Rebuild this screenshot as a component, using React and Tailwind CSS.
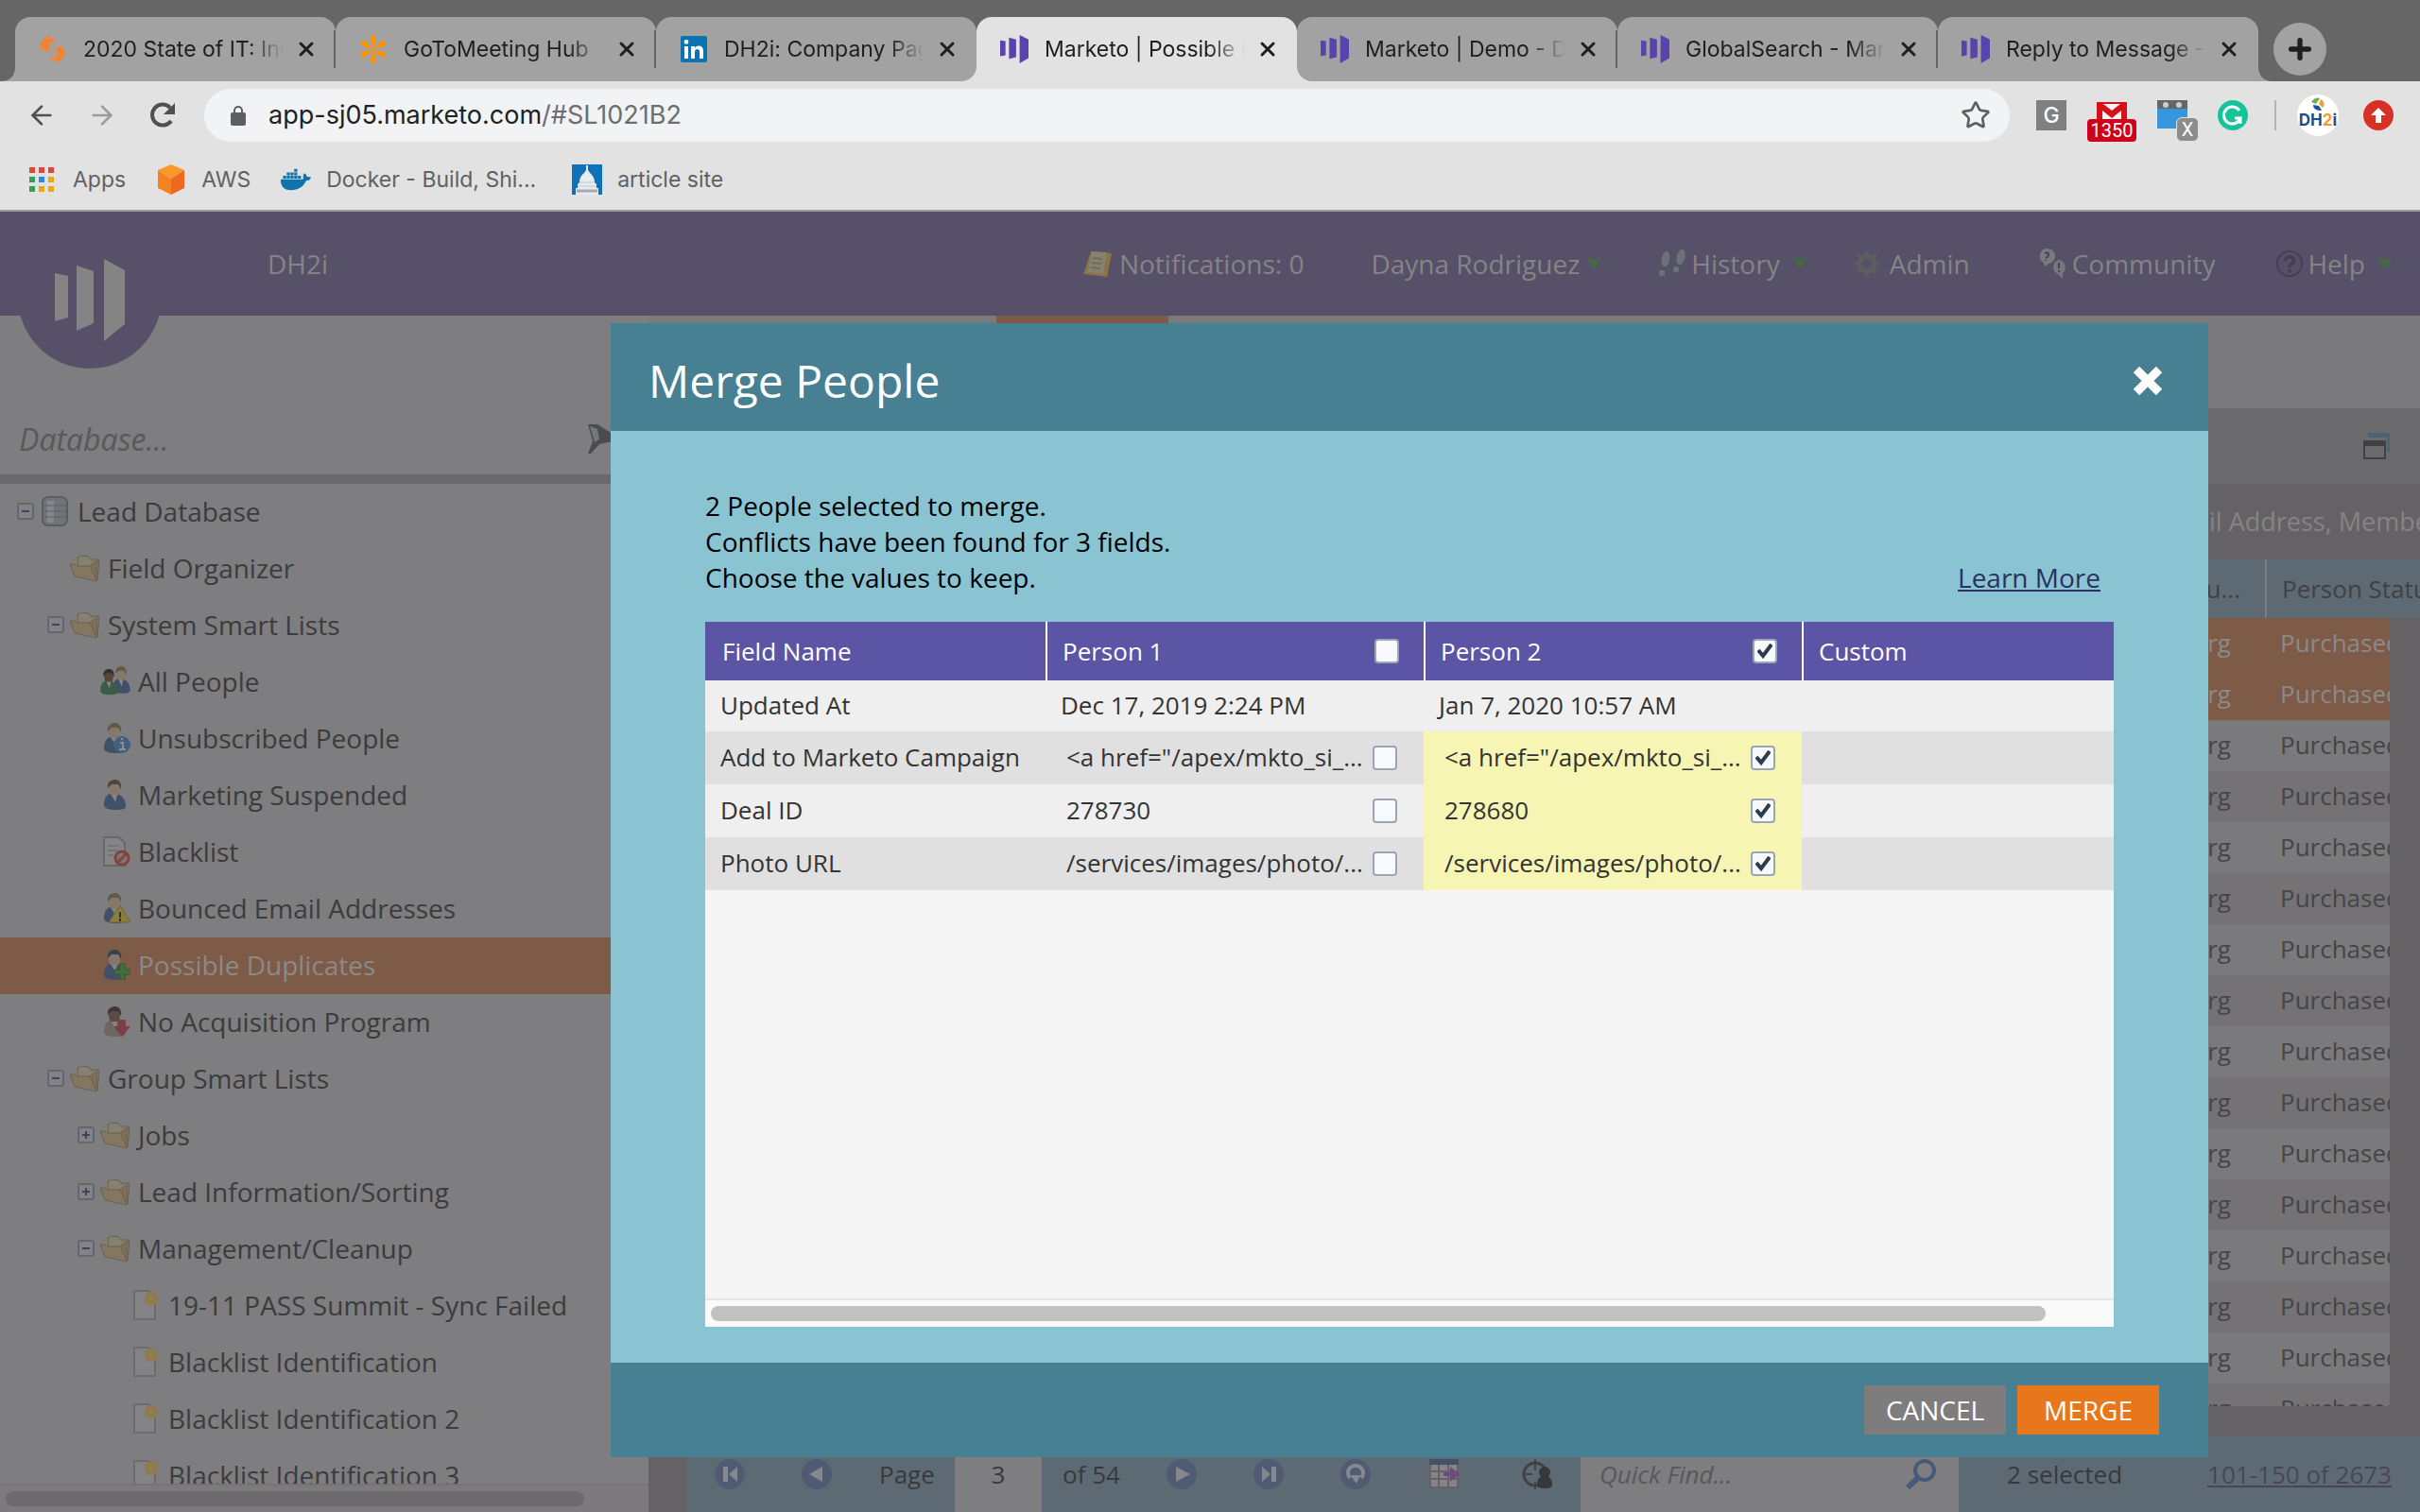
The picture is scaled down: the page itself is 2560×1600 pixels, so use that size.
import React, { useState } from "react";
import { ArrowLeft, ArrowRight, Plus, RotateCw, Star, X } from "lucide-react";
import { FaDocker } from "react-icons/fa";

/* ---------- icons ---------- */

const MarketoIcon = ({ className }) => (
  <svg viewBox="0 0 32 32" className={className} fill="currentColor">
    <path d="M0 6l6 1v16l-6 1zM10 3l8 2v20l-8 2zM22 0l10 5v21l-10 6z" />
  </svg>
);

const SpiceworksIcon = () => (
  <svg viewBox="0 0 32 32" className="size-8" fill="#f58233">
    <path d="M11 0l3 5 5 1-2 4 2 5-6-1-3 5-4-3-4 1 1-6 2-5 4-1z" />
    <path d="M21 32l-3-5-5-1 2-4-1-4 5 0 3-5 5 1 2 5-2 6-3 4-2-1z" />
    <circle cx="15" cy="12" r="3" fill="#a2a2a2" />
    <circle cx="18" cy="21" r="3" fill="#a2a2a2" />
  </svg>
);

const GoToIcon = () => (
  <svg viewBox="0 0 32 32" className="size-8" fill="#ff9100">
    {[0, 60, 120, 180, 240, 300].map((deg) => (
      <path key={deg} d="M16 16l-3-11a3 4 0 1 1 6 0z" transform={`rotate(${deg} 16 16)`} />
    ))}
  </svg>
);

const LinkedInIcon = () => (
  <svg viewBox="0 0 32 32" className="size-8">
    <rect x="2" y="2" width="28" height="28" rx="2" fill="#0a73b1" />
    <path
      fill="#fff"
      d="M6 13h4v13H6zM8 6a2.400 2.400 0 1 1 0 4.800A2.400 2.400 0 0 1 8 6zM13 13h4v2c1-1.600 2.400-2.400 4.200-2.400 3.400 0 4.800 2.200 4.800 6V26h-4v-6.800c0-2-.6-3.200-2.300-3.200-1.800 0-2.700 1.200-2.700 3.200V26h-4z"
    />
  </svg>
);

const AppsIcon = () => (
  <svg viewBox="0 0 26 26" className="size-[26px]">
    {["#ea4335", "#ea4335", "#ea4335", "#34a053", "#2f86f0", "#eaa80c", "#34a053", "#eaa80c", "#eaa80c"].map(
      (fill, i) => (
        <rect key={i} x={(i % 3) * 10} y={Math.floor(i / 3) * 10} width="6" height="6" fill={fill} />
      )
    )}
  </svg>
);

const AwsIcon = () => (
  <svg viewBox="0 0 32 32" className="size-8">
    <path d="M16 0l14 6-14 9L2 6z" fill="#fb9a2a" />
    <path d="M2 6l14 9v17L2 25z" fill="#f58220" />
    <path d="M30 6l-14 9v17l14-7z" fill="#ee6820" />
  </svg>
);

const CapitolIcon = () => (
  <svg viewBox="0 0 32 32" className="size-8">
    <rect width="32" height="32" fill="#0d72b8" />
    <path d="M15 1h2v5l2 3c4 3 5 7 5 10l2 2v4h2v7H4v-7h2v-4l2-2c0-3 1-7 5-10l2-3z" fill="#e9ecef" />
    <path d="M8 19h16M6 23h20" stroke="#c3c6ca" strokeWidth="1" />
    <path d="M5 28h22" stroke="#a7a9ac" strokeWidth="3" />
  </svg>
);

const LogoMark = () => (
  <svg viewBox="0 0 152 152" className="size-[152px]">
    <circle cx="76" cy="76" r="76" fill="#565168" />
    <path fill="#858485" d="M39 51l14 3v44l-14 4zM62 43l18 6v55l-18 8zM91 36l22 12v57l-22 18z" />
  </svg>
);

const NoteIcon = () => (
  <svg viewBox="0 0 32 32" className="size-8">
    <path d="M8 3l22 2-5 25-25-3z" fill="#8a7345" />
    <path d="M9 3l16 1-4 23-17-2z" fill="#85826f" />
    <path d="M10 10l10 1M9 15l10 1M8 20l10 1" stroke="#706c60" strokeWidth="2" />
  </svg>
);

const FeetIcon = () => (
  <svg viewBox="0 0 32 32" className="size-8" fill="#6c7079" stroke="#4d5058" strokeWidth="1">
    <ellipse cx="9" cy="11" rx="5" ry="9" transform="rotate(10 9 11)" />
    <ellipse cx="5" cy="26" rx="4" ry="4" />
    <ellipse cx="25" cy="9" rx="5" ry="9" transform="rotate(14 25 9)" />
    <ellipse cx="20" cy="22" rx="4" ry="4" />
  </svg>
);

const GearIcon = () => (
  <svg viewBox="0 0 32 32" className="size-7">
    <circle cx="16" cy="16" r="9" fill="none" stroke="#5d5e60" strokeWidth="6" />
    {[0, 45, 90, 135].map((deg) => (
      <path key={deg} d="M14 0h4v5h-4zM14 27h4v5h-4z" fill="#5d5e60" transform={`rotate(${deg} 16 16)`} />
    ))}
  </svg>
);

const CommunityIcon = () => (
  <svg viewBox="0 0 32 34" className="h-[34px] w-8">
    <path d="M9 1a8 8 0 0 1 2 16l-4 3-1-4A8 8 0 0 1 9 1z" fill="#7a7a7e" />
    <path d="M22 13a8 8 0 0 1 4 14l0 6-5-5a8 8 0 0 1 1-15z" fill="#77777c" />
    <path d="M7 6q4-2 4 1t-3 4M8 13v1" fill="none" stroke="#454450" strokeWidth="2" />
    <path d="M22 16v6M22 24v2" stroke="#454450" strokeWidth="2" />
  </svg>
);

const HelpIcon = () => (
  <svg viewBox="0 0 32 32" className="size-[30px]" fill="none" stroke="#434151">
    <circle cx="16" cy="16" r="14" strokeWidth="2" />
    <path d="M11 13c0-7 11-6 10 0-1 3-5 3-5 7" strokeWidth="4" />
    <circle cx="16" cy="24" r="1" strokeWidth="3" />
  </svg>
);

const CaretIcon = () => (
  <svg viewBox="0 0 14 12" className="h-3 w-3.5">
    <path d="M0 1q3-2 7 1 4-3 7-1L7 12z" fill="#46693f" />
  </svg>
);

const FunnelIcon = () => (
  <svg viewBox="0 0 36 32" className="h-8 w-9">
    <path d="M2 0h10l22 14v3l-20 4-9 10H2l5-13z" fill="#4b4b52" />
    <path d="M4 2l8 3 2 11-5 3z" fill="#77767b" />
  </svg>
);

const ToggleIcon = ({ open }) => (
  <svg viewBox="0 0 18 18" className="size-[18px]">
    <rect x="1" y="1" width="16" height="16" rx="2" fill="#828287" stroke="#64656f" strokeWidth="2" />
    <path d={open ? "M5 9h8" : "M5 9h8M9 5v8"} stroke="#3f4252" strokeWidth="2" />
  </svg>
);

const FolderIcon = () => (
  <svg viewBox="0 0 32 32" className="size-8" stroke="#6a6152" strokeWidth="1">
    <path d="M8 5l4-2 8 1 2 3 9 0-2 22-19-5z" fill="#85806f" />
    <path d="M0 12l5 0 3 2 13 0 6 2 1 14L5 25z" fill="#85765f" />
    <path d="M21 14l8-6-1 21z" fill="#7d6f58" />
  </svg>
);

const DatabaseIcon = () => (
  <svg viewBox="0 0 32 32" className="size-8">
    <rect x="3" y="1" width="26" height="30" rx="6" fill="#71757a" stroke="#595d63" strokeWidth="2" />
    <rect x="8" y="5" width="7" height="23" fill="#85888b" />
    <path d="M4 10h24M4 16h24M4 22h24" stroke="#5b5f66" strokeWidth="1" />
  </svg>
);

const Person = ({ hair = "#5f594b", skin = "#85786a", body = "#3f5068" }) => (
  <>
    <path d="M4 27c0-7 3-11 6-12h8c5 2 9 6 9 13 0 3-4 4-10 4S4 31 4 27z" fill={body} />
    <ellipse cx="15" cy="10" rx="6" ry="8" fill={skin} />
    <path d="M8 9c-1-7 4-9 8-9s7 4 6 10l-3-5-7 0z" fill={hair} />
    <path d="M12 16h6l-2 8z" fill="#858585" />
  </>
);

const TreeGlyph = ({ type }) => {
  if (type === "folder") return <FolderIcon />;
  if (type === "database") return <DatabaseIcon />;
  return (
    <svg viewBox="0 0 32 32" className="size-8">
      {type === "people" && (
        <>
          <g transform="translate(10 0) scale(.8 .9)"><Person /></g>
          <g transform="translate(-3 3) scale(.8 .85)"><Person hair="#34302e" skin="#58463c" body="#3b5c48" /></g>
        </>
      )}
      {type === "info" && (
        <>
          <Person />
          <circle cx="23" cy="23" r="9" fill="#465f7c" />
          <path d="M21 21h3v7M20 28h7M22 17h2" stroke="#8b9097" strokeWidth="2" fill="none" />
        </>
      )}
      {type === "person" && <Person hair="#4c463e" />}
      {type === "blocked" && (
        <>
          <path d="M4 1h16l6 6v24H4z" fill="#858486" stroke="#686769" strokeWidth="2" />
          <path d="M8 10h12M8 15h10M8 20h6" stroke="#747375" strokeWidth="2" />
          <circle cx="23" cy="23" r="7" fill="#7b7777" stroke="#85423f" strokeWidth="3" />
          <path d="M18 28l10-10" stroke="#85423f" strokeWidth="3" />
        </>
      )}
      {type === "warning" && (
        <>
          <Person />
          <path d="M21 13l11 18H9z" fill="#8b7d40" stroke="#716537" strokeWidth="1" />
          <path d="M21 20v6M21 27v3" stroke="#36332a" strokeWidth="2" />
        </>
      )}
      {type === "add" && (
        <>
          <Person hair="#37424d" />
          <path d="M21 15h5v6h6v5h-6v6h-5v-6h-6v-5h6z" fill="#41703e" stroke="#35572f" strokeWidth="1" />
        </>
      )}
      {type === "down" && (
        <>
          <Person hair="#3b3637" skin="#5b4a44" body="#6f6663" />
          <path d="M19 14h8v7h5l-9 11-9-11h5z" fill="#7b3e48" />
        </>
      )}
      {type === "page" && (
        <>
          <path d="M4 1h15l7 8v22H4z" fill="#838284" stroke="#6c6b6d" strokeWidth="2" />
          <circle cx="22" cy="9" r="7" fill="#94794a" />
          <circle cx="22" cy="9" r="2" fill="#88837a" />
        </>
      )}
    </svg>
  );
};

const WindowIcon = () => (
  <svg viewBox="0 0 28 28" className="size-7">
    <path d="M5 0h23v20h-3V5H5z" fill="#4d6273" />
    <path d="M0 8h24v20H0zM2 14v12h20V14z" fill="#414042" fillRule="evenodd" />
  </svg>
);

const PagerIcon = ({ name }) => (
  <svg viewBox="0 0 32 32" className="size-8">
    <circle cx="16" cy="16" r="16" fill="#4f5b73" />
    <g fill="#85888d">
      {name === "first" && <path d="M9 8h5v16H9zM24 8v16l-9-8z" />}
      {name === "prev" && <path d="M22 8v16L8 16z" />}
      {name === "next" && <path d="M10 8v16l15-8z" />}
      {name === "last" && <path d="M19 8h5v16h-5zM9 8v16l9-8z" />}
    </g>
    {name === "refresh" && (
      <>
        <path d="M10 20a8 8 0 1 1 12 0" fill="none" stroke="#85888d" strokeWidth="4" />
        <path d="M10 17h11l-4 9z" fill="#85888d" />
      </>
    )}
  </svg>
);

const ExportIcon = () => (
  <svg viewBox="0 0 32 32" className="size-8">
    <rect x="1" y="1" width="29" height="29" fill="#858488" stroke="#676069" strokeWidth="2" />
    <rect x="0" y="0" width="31" height="6" fill="#444f68" />
    <path d="M1 13h29M1 21h29M10 6v24M20 6v24" stroke="#676069" strokeWidth="2" />
    <path d="M15 14h7V8l10 8-10 8v-6h-7z" fill="#6b4c7b" />
  </svg>
);

const TargetIcon = () => (
  <svg viewBox="0 0 32 32" className="size-8">
    <circle cx="14" cy="16" r="12" fill="none" stroke="#404247" strokeWidth="3" />
    <path d="M14 0v12M0 16h11M14 24v8" stroke="#404247" strokeWidth="2" />
    <circle cx="24" cy="14" r="6" fill="#37383b" />
    <path d="M21 18h6c4 2 5 5 5 9 0 3-3 4-8 4s-8-1-8-4c0-4 1-7 5-9z" fill="#37383b" />
  </svg>
);

const SearchIcon = () => (
  <svg viewBox="0 0 32 32" className="size-8" fill="none" stroke="#465a7a">
    <circle cx="20" cy="12" r="10" strokeWidth="4" />
    <path d="M13 20L2 30" strokeWidth="6" />
  </svg>
);

/* ---------- data ---------- */

const tabs = [
  { title: "2020 State of IT: Industry", icon: <SpiceworksIcon /> },
  { title: "GoToMeeting Hub", icon: <GoToIcon /> },
  { title: "DH2i: Company Page", icon: <LinkedInIcon />, shape: "rounded-br-2xl" },
  { title: "Marketo | Possible Dup", active: true },
  { title: "Marketo | Demo - DH", shape: "rounded-bl-2xl" },
  { title: "GlobalSearch - Marketo" },
  { title: "Reply to Message - M" },
];

const tree = [
  { label: "Lead Database", level: 0, icon: "database", open: true },
  { label: "Field Organizer", level: 1, icon: "folder" },
  { label: "System Smart Lists", level: 1, icon: "folder", open: true },
  { label: "All People", level: 2, icon: "people" },
  { label: "Unsubscribed People", level: 2, icon: "info" },
  { label: "Marketing Suspended", level: 2, icon: "person" },
  { label: "Blacklist", level: 2, icon: "blocked" },
  { label: "Bounced Email Addresses", level: 2, icon: "warning" },
  { label: "Possible Duplicates", level: 2, icon: "add", selected: true },
  { label: "No Acquisition Program", level: 2, icon: "down" },
  { label: "Group Smart Lists", level: 1, icon: "folder", open: true },
  { label: "Jobs", level: 2, icon: "folder", open: false },
  { label: "Lead Information/Sorting", level: 2, icon: "folder", open: false },
  { label: "Management/Cleanup", level: 2, icon: "folder", open: true },
  { label: "19-11 PASS Summit - Sync Failed", level: 3, icon: "page" },
  { label: "Blacklist Identification", level: 3, icon: "page" },
  { label: "Blacklist Identification 2", level: 3, icon: "page" },
  { label: "Blacklist Identification 3", level: 3, icon: "page" },
];

const indent = ["pl-[18px]", "pl-[50px]", "pl-[82px]", "pl-[114px]"];

const conflicts = [
  { field: "Add to Marketo Campaign", one: '<a href="/apex/mkto_si_...', two: '<a href="/apex/mkto_si_...' },
  { field: "Deal ID", one: "278730", two: "278680" },
  { field: "Photo URL", one: "/services/images/photo/...", two: "/services/images/photo/..." },
];

/* ---------- browser ---------- */

const BrowserTab = ({ tab, divider }) => (
  <li
    className={`flex h-full max-w-[339px] min-w-0 flex-1 ${
      tab.shape ? "bg-[linear-gradient(#666_50%,#e2e2e2_50%)]" : ""
    }`}
  >
    <div
      className={`flex min-w-0 flex-1 items-center rounded-t-2xl pl-6 ${tab.shape || ""} ${
        tab.active ? "bg-[#e2e2e2]" : "bg-[#a2a2a2]"
      }`}
    >
      {tab.icon || <MarketoIcon className="size-8 p-px text-[#5943ad]" />}
      <span className="ml-4 w-[212px] overflow-hidden whitespace-nowrap text-[#1f1f1f] [mask-image:linear-gradient(90deg,#000_82%,transparent)]">
        {tab.title}
      </span>
      <button aria-label="Close tab" className="ml-3 text-[#1f1f1f]">
        <X className="size-6" strokeWidth={3} />
      </button>
      {divider && <span className="ml-auto h-10 w-0.5 bg-[#666]" />}
    </div>
  </li>
);

const BrowserChrome = () => (
  <header className="shrink-0 border-b-2 border-[#9a9a9a] bg-[#e2e2e2] font-['Inter','Roboto',sans-serif] text-[23px]">
    <div className="flex h-[86px] bg-[#666] pt-[18px]">
      <svg viewBox="0 0 16 16" className="size-4 self-end" fill="#a2a2a2">
        <path d="M16 0v16H0Q16 16 16 0z" />
      </svg>
      <ul className="flex min-w-0 flex-1">
        {tabs.map((tab, i) => (
          <BrowserTab key={tab.title} tab={tab} divider={[0, 1, 4, 5].includes(i)} />
        ))}
        <li className="flex">
          <svg viewBox="0 0 16 16" className="size-4 self-end" fill="#a2a2a2">
            <path d="M0 0v16h16Q0 16 0 0z" />
          </svg>
          <button
            aria-label="New tab"
            className="mt-1.5 flex size-14 items-center justify-center rounded-full bg-[#a2a2a2] text-[#1f1f1f]"
          >
            <Plus className="size-8" strokeWidth={4} />
          </button>
        </li>
      </ul>
    </div>

    <div className="flex h-[72px] items-center py-2 pr-7 pl-7">
      <button aria-label="Back" className="text-[#505050]"><ArrowLeft className="size-8" strokeWidth={2} /></button>
      <button aria-label="Forward" className="ml-8 text-[#9c9c9c]"><ArrowRight className="size-8" strokeWidth={2} /></button>
      <button aria-label="Reload" className="ml-8 text-[#505050]">
        <svg viewBox="0 0 32 32" className="size-8">
          <path d="M25 22a11 11 0 1 1-1-14" fill="none" stroke="currentColor" strokeWidth="4" />
          <path d="M29 3v12H17z" fill="currentColor" />
        </svg>
      </button>
      <div className="ml-7 flex h-14 flex-1 items-center rounded-full bg-[#f1f3f4] pr-5 pl-7">
        <svg viewBox="0 0 16 22" className="h-[22px] w-4">
          <path d="M4 9V6a4 4 0 0 1 8 0v3" fill="none" stroke="#5c5f62" strokeWidth="2" />
          <rect y="8" width="16" height="14" rx="2" fill="#5c5f62" />
        </svg>
        <div
          role="textbox"
          aria-label="Address"
          contentEditable
          suppressContentEditableWarning
          className="ml-6 flex-1 text-[27px] text-[#202124]"
        >
          app-sj05.marketo.com<span className="text-[#6b6e71]">/#SL1021B2</span>
        </div>
        <button aria-label="Bookmark" className="text-[#5c5f62]"><Star className="size-8" strokeWidth={2} /></button>
      </div>

      <div className="ml-7 flex items-center gap-8">
        <span className="flex size-8 items-center justify-center bg-[#808080] text-[23px] font-medium text-white">G</span>
        <span className="relative size-8">
          <svg viewBox="0 0 32 24" className="mt-0.5 h-6 w-8">
            <rect width="32" height="24" fill="#f4f4f4" />
            <path d="M0 0h32v24h-6V9l-10 8L6 9v15H0z" fill="#d5121a" />
            <path d="M7 2l9 7 9-7z" fill="#f4f4f4" />
          </svg>
          <span className="absolute top-5 -left-2.5 flex h-6 w-[52px] items-center justify-center rounded-[4px] bg-[#d0021b] font-['Roboto'] text-[20px] text-white">
            1350
          </span>
        </span>
        <span className="relative size-8">
          <svg viewBox="0 0 32 30" className="h-[30px] w-8">
            <rect width="32" height="30" rx="1" fill="#3596dd" />
            <rect width="32" height="9" fill="#666" />
            <circle cx="9" cy="5" r="3" fill="#ccc" />
            <circle cx="23" cy="5" r="3" fill="#ccc" />
          </svg>
          <span className="absolute top-[18px] left-5 flex h-[26px] w-6 items-center justify-center rounded-md border border-[#e2e2e2] bg-[#8c8c8c] font-['Roboto'] text-[20px] text-white">
            X
          </span>
        </span>
        <svg viewBox="0 0 32 32" className="size-8">
          <circle cx="16" cy="16" r="16" fill="#15c39a" />
          <path d="M23 11a9 9 0 1 0 1 8h-6M24 18v7" fill="none" stroke="#fff" strokeWidth="3" />
        </svg>
      </div>
      <span className="mx-[22px] ml-7 h-8 w-0.5 bg-[#b4b4b4]" />
      <span className="flex size-11 flex-col items-center rounded-full bg-white">
        <svg viewBox="0 0 16 16" className="mt-0.5 size-4">
          <path d="M1 6Q5 0 10 2L6 8z" fill="#6ab04c" />
          <path d="M11 3q6 4 2 9L9 8z" fill="#f0a030" />
          <path d="M3 9q0 6 9 6L9 10z" fill="#1b4f9c" />
        </svg>
        <span className="text-[17px] leading-[18px] font-bold text-[#174f9a]">
          DH<span className="text-[#f39a2d]">2</span>i
        </span>
      </span>
      <svg viewBox="0 0 32 32" className="ml-[26px] size-8">
        <circle cx="16" cy="16" r="16" fill="#d93025" />
        <path d="M16 8l8 8h-5v8h-6v-8H8z" fill="#fff" />
      </svg>
    </div>

    <nav className="flex h-16 items-center gap-8 pl-[31px] text-[#5f6164]">
      <a href="#apps" className="flex items-center gap-5"><AppsIcon />Apps</a>
      <a href="#aws" className="flex items-center gap-4"><AwsIcon />AWS</a>
      <a href="#docker" className="flex items-center gap-4">
        <FaDocker className="size-8 text-[#0f74ad]" />Docker - Build, Shi...
      </a>
      <a href="#article" className="ml-1.5 flex items-center gap-4"><CapitolIcon />article site</a>
    </nav>
  </header>
);

/* ---------- app ---------- */

const TopNav = () => (
  <nav className="flex h-[110px] shrink-0 items-center bg-[#565168] pl-[19px] text-[28px] text-[#858485]">
    {/* the mark hangs below the bar */}
    <div className="relative z-10 mt-[70px]"><LogoMark /></div>
    <span className="ml-28">DH2i</span>
    <div className="ml-auto flex items-center pr-[30px]">
      <a href="#notifications" className="flex items-center gap-1.5"><NoteIcon />Notifications: 0</a>
      <button className="ml-[71px] flex items-center gap-2">Dayna Rodriguez<CaretIcon /></button>
      <button className="ml-[60px] flex items-center gap-1"><FeetIcon />History<span className="ml-2.5"><CaretIcon /></span></button>
      <a href="#admin" className="ml-[50px] flex items-center gap-2.5"><GearIcon />Admin</a>
      <a href="#community" className="ml-[72px] flex items-center gap-1"><CommunityIcon />Community</a>
      <button className="ml-16 flex items-center gap-1"><HelpIcon />Help<span className="ml-2.5"><CaretIcon /></span></button>
    </div>
  </nav>
);

const Sidebar = () => (
  <aside className="flex w-[686px] shrink-0 flex-col bg-[#7e7d7f]">
    <div className="flex h-[168px] items-center pt-[94px] pl-5">
      <input
        aria-label="Search database"
        placeholder="Database..."
        className="w-[600px] text-[32px] italic outline-none placeholder:text-[#59585a]"
      />
      <FunnelIcon />
    </div>
    <div className="h-2.5 shrink-0 bg-[#69686a]" />
    <ul className="min-h-0 flex-1 overflow-hidden">
      {tree.map((node) => (
        <li
          key={node.label}
          className={`flex h-[60px] items-center pb-0.5 text-[28px] ${indent[node.level]} ${
            node.selected ? "bg-[#7d5b47] text-[#8b8a8a]" : "text-[#3c3b3d]"
          }`}
        >
          {node.open === undefined ? (
            <span className="mr-1.5 w-[18px]" />
          ) : (
            <button aria-label={node.open ? "Collapse" : "Expand"} className="mr-1.5">
              <ToggleIcon open={node.open} />
            </button>
          )}
          <TreeGlyph type={node.icon} />
          <span className="ml-2 whitespace-nowrap">{node.label}</span>
        </li>
      ))}
    </ul>
    <div className="h-[30px] shrink-0 border-t-2 border-[#767376] bg-[#7d7a7d] px-1.5 pt-1.5">
      <div className="h-4 w-[612px] rounded-full bg-[#6d6b6d]" />
    </div>
  </aside>
);

const PeopleGrid = () => (
  <div className="min-h-0 flex-1 overflow-hidden">
    <table className="w-full table-fixed border-separate border-spacing-0 text-[26px] whitespace-nowrap">
      <colgroup>
        <col />
        <col className="w-[132px]" />
        <col className="w-8" />
      </colgroup>
      <thead>
        <tr className="h-[62px] bg-[#5e6a73] text-left text-[#3f4144]">
          <th className="p-0 pr-[26px] text-right font-normal">u...</th>
          <th colSpan={2} className="overflow-hidden border-l-2 border-[#7e7d7f] p-0 pl-4 font-normal">
            Person Status
          </th>
        </tr>
      </thead>
      <tbody>
        {Array.from({ length: 16 }, (_, i) => (
          <tr
            key={i}
            className={`h-[54px] ${
              i < 2 ? "bg-[#7d5b47] text-[#8b8a8a]" : i % 2 ? "bg-[#757275] text-[#464547]" : "bg-[#7a797b] text-[#464547]"
            }`}
          >
            <td className="p-0 pr-9 pb-0.5 text-right">rg</td>
            <td className="overflow-hidden p-0 pb-0.5 pl-4">Purchased</td>
            <td className="bg-[#656265] p-0" />
          </tr>
        ))}
      </tbody>
    </table>
  </div>
);

const PagingBar = () => (
  <footer className="flex h-20 shrink-0 items-center bg-[#5e6a73] pl-[30px] text-[26px] whitespace-nowrap text-[#37393c]">
    <button aria-label="First page"><PagerIcon name="first" /></button>
    <button aria-label="Previous page" className="ml-[60px]"><PagerIcon name="prev" /></button>
    <label htmlFor="page" className="ml-[50px] w-20">Page</label>
    <input id="page" defaultValue="3" className="h-full w-[92px] bg-[#7e7d7f] text-center outline-none" />
    <span className="ml-[22px] w-[110px]">of 54</span>
    <button aria-label="Next page"><PagerIcon name="next" /></button>
    <button aria-label="Last page" className="ml-[60px]"><PagerIcon name="last" /></button>
    <button aria-label="Refresh" className="ml-[60px]"><PagerIcon name="refresh" /></button>
    <button aria-label="Export" className="ml-[62px]"><ExportIcon /></button>
    <button aria-label="Target" className="ml-[66px]"><TargetIcon /></button>
    <div className="ml-[30px] flex h-full w-[400px] items-center bg-[#7e7d7f] pr-6 pl-5">
      <input
        aria-label="Quick find"
        placeholder="Quick Find..."
        className="min-w-0 flex-1 italic outline-none placeholder:text-[#59585a]"
      />
      <SearchIcon />
    </div>
    <span className="ml-auto">2 selected</span>
    <a href="#range" className="mr-[30px] ml-[90px] text-[#474558] underline">101-150 of 2673</a>
  </footer>
);

const Workspace = () => (
  <section className="flex min-w-0 flex-1 flex-col bg-[#656265]">
    <div className="h-[98px] shrink-0 bg-[#7a797b] pl-[368px]">
      <div className="h-2 w-[182px] bg-[#7e5b47]" />
    </div>
    <div className="flex h-20 shrink-0 items-center justify-end bg-[#6b6a6c] pr-8">
      <button aria-label="New window"><WindowIcon /></button>
    </div>
    <div className="flex min-h-0 flex-1 flex-col pl-10">
      <div className="flex h-20 shrink-0 items-center justify-end overflow-hidden text-[27px] whitespace-nowrap text-[#858485]">
        <span className="w-[278px]">Email Address, Member</span>
      </div>
      <PeopleGrid />
      <div className="h-8 shrink-0" />
      <PagingBar />
    </div>
  </section>
);

/* ---------- merge dialog ---------- */

const Tick = ({ label, checked, onChange }) => (
  <label className="grid shrink-0 place-items-center">
    <input
      type="checkbox"
      aria-label={label}
      checked={checked}
      onChange={onChange}
      className="peer size-[26px] appearance-none rounded-[4px] border-2 border-[#9aa5b5] bg-[#f7f9fc] [grid-area:1/1]"
    />
    <svg
      viewBox="0 0 16 16"
      className="pointer-events-none invisible size-4 peer-checked:visible [grid-area:1/1]"
      fill="none"
      stroke="#2c3b4e"
      strokeWidth="4"
    >
      <path d="M1 7l5 6 9-12" />
    </svg>
  </label>
);

const MergeDialog = () => {
  const [keep, setKeep] = useState([2, 2, 2]);
  const choose = (row, person) => setKeep(keep.map((k, i) => (i === row ? person : k)));
  const chooseAll = (person) => setKeep(keep.map(() => person));
  const allFrom = (person) => keep.every((k) => k === person);

  return (
    <div role="dialog" aria-label="Merge People" className="flex flex-1 flex-col bg-[#8ac3d1]">
      <div className="flex h-[114px] shrink-0 items-center justify-between bg-[#478093] pt-2 pr-12 pl-10 text-white">
        <h1 className="text-[48px]">Merge People</h1>
        <button aria-label="Close">
          <svg viewBox="0 0 32 32" className="size-8" stroke="#fff" strokeWidth="9">
            <path d="M4 4l24 24M28 4L4 28" />
          </svg>
        </button>
      </div>

      <div className="flex min-h-0 flex-1 flex-col px-[100px] pt-[60px] pb-[38px]">
        <div className="flex items-end justify-between pr-3.5 pb-7 text-[28px] leading-[38px] text-black">
          <p>
            2 People selected to merge.
            <br />
            Conflicts have been found for 3 fields.
            <br />
            Choose the values to keep.
          </p>
          <a href="#learn-more" className="text-[#2b3163] underline">Learn More</a>
        </div>

        <div className="flex min-h-0 flex-1 flex-col bg-[#f5f5f5]">
          <table className="w-full table-fixed border-separate border-spacing-0 text-[26px] whitespace-nowrap text-[#333]">
            <colgroup>
              <col className="w-[360px]" />
              <col className="w-[400px]" />
              <col className="w-[400px]" />
              <col />
            </colgroup>
            <thead>
              <tr className="h-[62px] bg-[#5c54a4] text-left text-white">
                <th className="p-0 pl-[18px] font-normal">Field Name</th>
                {[1, 2].map((person) => (
                  <th key={person} className="border-l-2 border-white p-0 pr-[26px] pl-4 font-normal">
                    <div className="flex items-center justify-between">
                      Person {person}
                      <Tick
                        label={`Keep all from person ${person}`}
                        checked={allFrom(person)}
                        onChange={() => chooseAll(person)}
                      />
                    </div>
                  </th>
                ))}
                <th className="border-l-2 border-white p-0 pl-4 font-normal">Custom</th>
              </tr>
            </thead>
            <tbody>
              <tr className="h-[54px] bg-[#efefef]">
                <td className="p-0 pb-0.5 pl-4">Updated At</td>
                <td className="p-0 pb-0.5 pl-4">Dec 17, 2019 2:24 PM</td>
                <td className="p-0 pb-0.5 pl-4">Jan 7, 2020 10:57 AM</td>
                <td />
              </tr>
              {conflicts.map((row, i) => (
                <tr key={row.field} className={`h-14 ${i % 2 ? "bg-[#efefef]" : "bg-[#e0e0e0]"}`}>
                  <td className="p-0 pb-0.5 pl-4">{row.field}</td>
                  {[1, 2].map((person) => (
                    <td key={person} className={`p-0 pr-7 pl-[22px] ${keep[i] === person ? "bg-[#f6f5b3]" : ""}`}>
                      <div className="flex items-center justify-between">
                        <span className="pb-0.5">{person === 1 ? row.one : row.two}</span>
                        <Tick
                          label={`Keep ${row.field} from person ${person}`}
                          checked={keep[i] === person}
                          onChange={() => choose(i, person)}
                        />
                      </div>
                    </td>
                  ))}
                  <td />
                </tr>
              ))}
            </tbody>
          </table>
          <div className="mt-auto h-[30px] border-t-2 border-[#e6e6e6] bg-[#fafafa] px-1.5 pt-1.5">
            <div className="h-4 w-[calc(100%-66px)] rounded-full bg-[#c1c1c1]" />
          </div>
        </div>
      </div>

      <div className="flex h-[100px] shrink-0 items-center justify-end gap-3 bg-[#478093] pr-[52px] text-[28px] text-white">
        <button className="h-[52px] w-[150px] bg-[#7f7c7e]">CANCEL</button>
        <button className="h-[52px] w-[150px] bg-[#e8761a]">MERGE</button>
      </div>
    </div>
  );
};

const App = () => (
  <div className="flex h-screen w-full flex-col overflow-hidden">
    <BrowserChrome />
    <div className="relative flex min-h-0 flex-1 flex-col font-['Open_Sans','Noto_Sans',sans-serif]">
      <TopNav />
      <main className="flex min-h-0 flex-1">
        <Sidebar />
        <Workspace />
      </main>
      <div className="absolute inset-0 z-20 flex pt-[118px] pr-56 pb-[58px] pl-[646px]">
        <MergeDialog />
      </div>
    </div>
  </div>
);

export default App;
